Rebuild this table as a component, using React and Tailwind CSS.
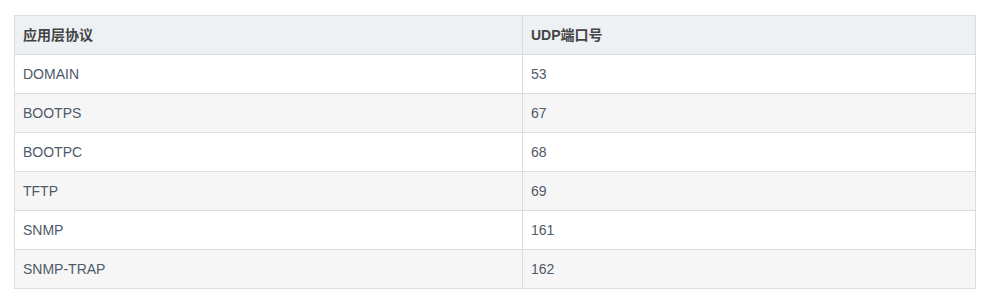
const rows = [
  ["DOMAIN", "53"],
  ["BOOTPS", "67"],
  ["BOOTPC", "68"],
  ["TFTP", "69"],
  ["SNMP", "161"],
  ["SNMP-TRAP", "162"],
];

export default function App() {
  return (
    <div className="w-[994px] h-[299px] bg-white pt-[15px] pl-[14px] font-['Liberation_Sans','Noto_Sans_CJK_SC',sans-serif] text-[14px]">
      <table className="w-[962px] border-collapse border border-[#dddddd]">
        <thead>
          <tr className="bg-[#eef1f4]">
            <th className="w-[508px] border border-[#dddddd] px-2 py-[9px] text-left font-bold leading-5 text-[#444444]">应用层协议</th>
            <th className="border border-[#dddddd] px-2 py-[9px] text-left font-bold leading-5 text-[#444444]">UDP端口号</th>
          </tr>
        </thead>
        <tbody>
          {rows.map(([name, port], i) => (
            <tr key={name} className={i % 2 === 1 ? "bg-[#f6f6f6]" : "bg-white"}>
              <td className="border border-[#dddddd] px-2 py-[9px] leading-5 text-[#4e5a68]">{name}</td>
              <td className="border border-[#dddddd] px-2 py-[9px] leading-5 text-[#4e5a68]">{port}</td>
            </tr>
          ))}
        </tbody>
      </table>
    </div>
  );
}
